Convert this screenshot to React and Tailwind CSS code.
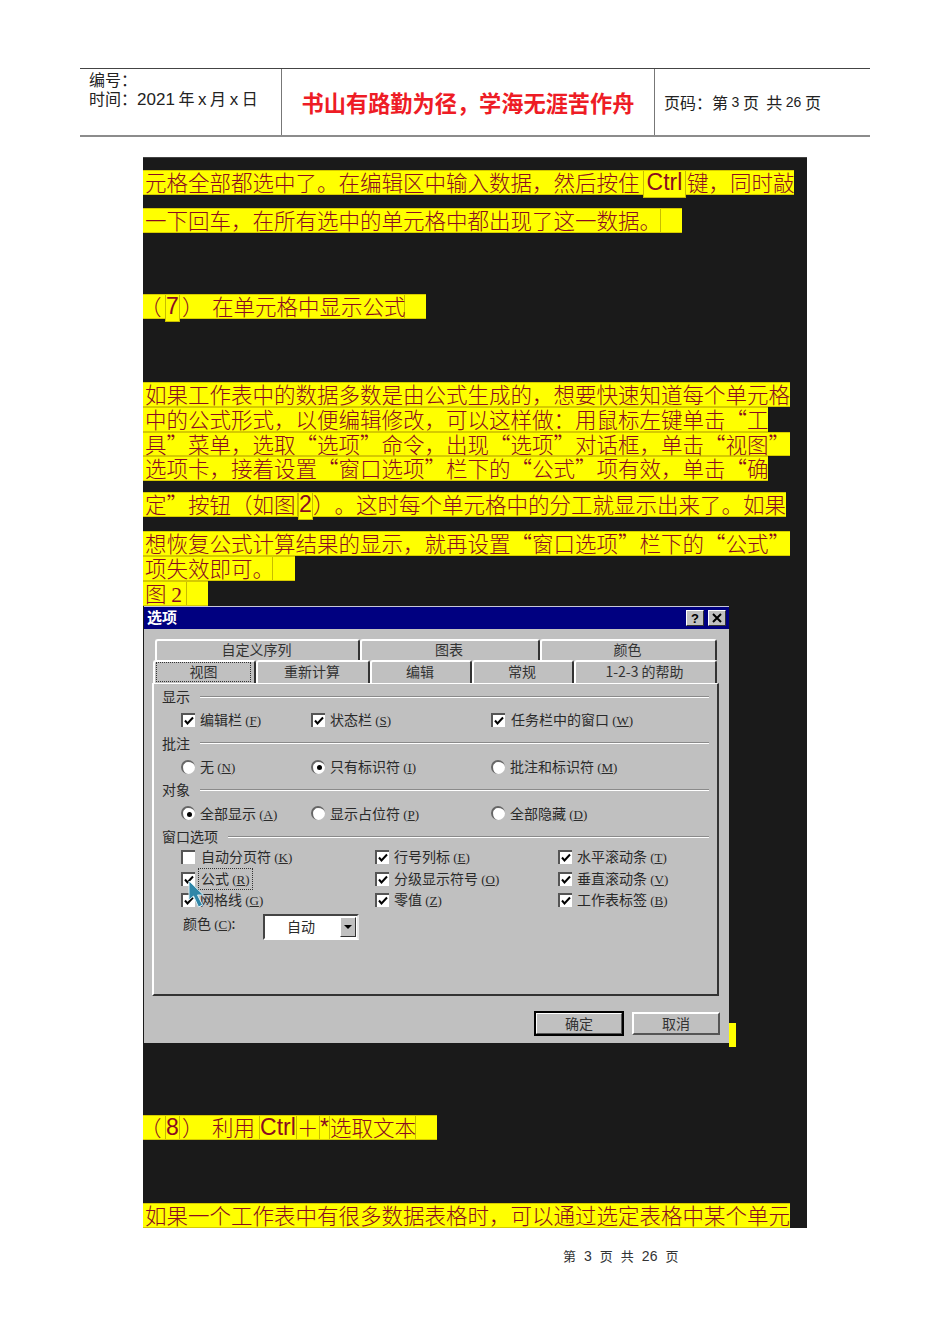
import React from "react";

const Seg = ({ w, c = "", children }) => (
  <span className={`block shrink-0 h-full whitespace-pre ${c}`} style={w ? { width: w } : undefined}>{children}</span>
);
const Lat = ({ w, children, tall }) => (
  <span
    className={`block shrink-0 bg-[#ffff00] border-x border-[#c8bc00] text-center text-[23px] font-['Liberation_Sans',sans-serif] ${tall ? "h-[27px] -mb-[2px] border-b" : "h-full"}`}
    style={{ width: w }}
  >{children}</span>
);
const Line = ({ w, h = "h-[25px]", mt = "", children }) => (
  <div
    className={`flex ${h} ${mt} pl-[2px] bg-[#ffff00] border-y border-[#d6ca00] text-[21.5px] leading-[22px] font-light text-[#8a0b22] [text-spacing-trim:space-all]`}
    style={{ width: w }}
  >{children}</div>
);

const Check = ({ on = true }) => (
  <span className="relative block w-[14px] h-[14px] shrink-0 bg-white border-l-2 border-t-2 border-[#555]">
    {on && (
      <svg viewBox="0 0 12 12" className="absolute left-0 top-0 w-[12px] h-[12px]">
        <path d="M2 5.5 L4.5 8.5 L10 2.5" fill="none" stroke="#000" strokeWidth="2" />
      </svg>
    )}
  </span>
);
const Radio = ({ on }) => (
  <span className="shrink-0 w-[14px] h-[14px] rounded-full bg-white border-l-2 border-t-2 border-[#666] flex items-center justify-center">
    {on && <span className="block w-[5px] h-[5px] rounded-full bg-black" />}
  </span>
);
const Key = ({ k }) => (
  <span className="text-[13px] font-['Liberation_Serif',serif]">(<span className="underline">{k}</span>)</span>
);
const Opt = ({ mark, gap = "gap-[5px]", text, k, focus }) => (
  <div className={`flex items-center ${gap} h-full`}>
    {mark}
    <span className={`whitespace-pre ${focus ? "outline-1 outline-dotted outline-[#333] outline-offset-[1px] px-[1px] leading-[17px]" : ""}`}>{text} <Key k={k} /></span>
  </div>
);
const Legend = ({ t }) => (
  <div className="flex items-center h-[23.33px] gap-[10px]">
    <span>{t}</span>
    <span className="block flex-1 h-[2px] border-t border-b border-t-[#8a8a8a] border-b-white" />
  </div>
);
const Row3 = ({ children }) => (
  <div className="grid grid-cols-[130px_180px_1fr] h-[23.33px] pl-[19px]">{children}</div>
);
const WRow = ({ children, c = "" }) => (
  <div className={`relative grid grid-cols-[194px_183px_1fr] h-[21.5px] pl-[19px] ${c}`}>{children}</div>
);
const Tab = ({ w, h, children }) => (
  <div
    className={`flex items-center justify-center shrink-0 ${h} pb-[2px] pr-[2px] rounded-t-[3px] border-t-2 border-l-2 border-t-white border-l-white border-r-2 border-r-[#333] text-[14px] text-[#333]`}
    style={{ width: w }}
  >{children}</div>
);
const Btn = ({ children, def }) => (
  <button className={`flex items-center justify-center w-[88px] h-[23px] text-[14px] text-[#333] bg-[#c0c0c0] border-2 border-t-white border-l-white border-r-[#555] border-b-[#555] ${def ? "outline-2 outline-black -outline-offset-1" : ""}`}>
    {children}
  </button>
);

function Dialog() {
  return (
    <div className="w-[585px] h-[437px] ml-[1px] shrink-0 bg-[#c0c0c0] text-[14px] text-[#2a2a2a] border-t border-[#c8c8d8]">
      <div className="flex items-center justify-between h-[22px] bg-[#000080] px-[3px]">
        <span className="text-white font-bold text-[15px] pb-[2px]">选项</span>
        <div className="flex gap-[4px]">
          <span className="flex items-center justify-center w-[18px] h-[16px] bg-[#c0c0c0] border border-t-white border-l-white border-r-[#333] border-b-[#333] text-black font-bold text-[13px] leading-none font-['Liberation_Sans',sans-serif]">?</span>
          <span className="flex items-center justify-center w-[18px] h-[16px] bg-[#c0c0c0] border border-t-white border-l-white border-r-[#333] border-b-[#333]">
            <svg viewBox="0 0 10 10" className="w-[10px] h-[10px]"><path d="M1 1 L9 9 M9 1 L1 9" stroke="#000" strokeWidth="2" /></svg>
          </span>
        </div>
      </div>
      <div className="flex ml-[11px] mt-[10px]">
        <Tab w={205} h="h-[21px]">自定义序列</Tab>
        <Tab w={180} h="h-[21px]">图表</Tab>
        <Tab w={177} h="h-[21px]">颜色</Tab>
      </div>
      <div className="flex ml-[9px]">
        <Tab w={103} h="h-[23px]">
          <span className="flex items-center justify-center w-[93px] h-[18px] outline-1 outline-dotted outline-[#333]">视图</span>
        </Tab>
        <Tab w={114} h="h-[23px]">重新计算</Tab>
        <Tab w={102} h="h-[23px]">编辑</Tab>
        <Tab w={102} h="h-[23px]">常规</Tab>
        <Tab w={143} h="h-[23px]">1-2-3 的帮助</Tab>
      </div>
      <div className="ml-[8px] w-[567px] h-[313px] pt-[1px] pl-[8px] pr-[8px] border-l-2 border-t border-l-white border-t-white border-r-2 border-b-2 border-r-[#333] border-b-[#333]">
        <Legend t="显示" />
        <Row3>
          <Opt mark={<Check />} text="编辑栏" k="F" />
          <Opt mark={<Check />} text="状态栏" k="S" />
          <Opt mark={<Check />} gap="gap-[6px]" text="任务栏中的窗口" k="W" />
        </Row3>
        <Legend t="批注" />
        <Row3>
          <Opt mark={<Radio />} text="无" k="N" />
          <Opt mark={<Radio on />} text="只有标识符" k="I" />
          <Opt mark={<Radio />} text="批注和标识符" k="M" />
        </Row3>
        <Legend t="对象" />
        <Row3>
          <Opt mark={<Radio on />} text="全部显示" k="A" />
          <Opt mark={<Radio />} text="显示占位符" k="P" />
          <Opt mark={<Radio />} text="全部隐藏" k="D" />
        </Row3>
        <Legend t="窗口选项" />
        <WRow c="-mt-[2px]">
          <Opt mark={<Check on={false} />} gap="gap-[6px]" text="自动分页符" k="K" />
          <Opt mark={<Check />} text="行号列标" k="E" />
          <Opt mark={<Check />} text="水平滚动条" k="T" />
        </WRow>
        <WRow>
          <Opt mark={<Check />} text="公式" k="R" focus />
          <Opt mark={<Check />} text="分级显示符号" k="O" />
          <Opt mark={<Check />} text="垂直滚动条" k="V" />
          <svg viewBox="0 0 16 28" className="absolute z-10 left-[26px] top-[12px] w-[16px] h-[28px]">
            <path d="M1 1 L1 20 L5.5 16 L10.5 27 L14.5 25 L9.5 15 L15.5 15 Z" fill="#2f86a8" stroke="#d8eef5" strokeWidth="1" />
          </svg>
        </WRow>
        <WRow>
          <Opt mark={<Check />} text="网格线" k="G" />
          <Opt mark={<Check />} text="零值" k="Z" />
          <Opt mark={<Check />} text="工作表标签" k="B" />
        </WRow>
        <div className="flex items-start mt-[3px] pl-[21px]">
          <span className="w-[80px] leading-[18px] whitespace-pre">颜色 <Key k="C" />:</span>
          <div className="flex items-center justify-between w-[96px] h-[26px] bg-white border-2 border-t-[#444] border-l-[#444] border-r-[#e8e8e8] border-b-white pr-[1px]">
            <span className="pl-[22px]">自动</span>
            <span className="flex items-center justify-center w-[16px] h-[20px] bg-[#c0c0c0] border border-t-white border-l-white border-r-[#333] border-b-[#333]">
              <span className="block w-0 h-0 border-x-[4px] border-x-transparent border-t-[4px] border-t-black" />
            </span>
          </div>
        </div>
      </div>
      <div className="flex justify-end gap-[9px] mt-[16px] pr-[9px]">
        <Btn def>确定</Btn>
        <Btn>取消</Btn>
      </div>
    </div>
  );
}

export default function App() {
  return (
    <div className="w-[950px] h-[1344px] bg-white font-['Noto_Sans_CJK_SC','Liberation_Sans',sans-serif] pt-[68px] overflow-hidden">
      <div className="grid grid-cols-[201px_373px_216px] h-[69px] w-[790px] ml-[80px] border-t border-t-[#444] border-b-2 border-b-[#8c8c8c] text-[#222] [text-spacing-trim:space-all]">
        <div className="pl-[9px] pt-[1px] text-[16px] leading-[19px]">
          <div>编号：</div>
          <div className="whitespace-pre">时间：<span className="font-['Liberation_Sans',sans-serif] text-[17px]">2021</span> 年 <span className="font-['Liberation_Sans',sans-serif] text-[17px]">x</span> 月 <span className="font-['Liberation_Sans',sans-serif] text-[17px]">x</span> 日</div>
        </div>
        <div className="flex items-center justify-center border-l border-[#777] text-[22.2px] font-bold text-[#ee1c25] pt-[2px]">书山有路勤为径，学海无涯苦作舟</div>
        <div className="flex items-center pl-[9px] border-l border-[#777] text-[16px] whitespace-pre">页码：第 <span className="text-[14px] font-['Liberation_Sans',sans-serif]">3</span> 页  共 <span className="text-[14px] font-['Liberation_Sans',sans-serif]">26</span> 页</div>
      </div>

      <div className="w-[664px] h-[1071px] ml-[143px] mt-[20px] pt-[12px] bg-[#1a1a1a] border-t border-[#444]">
        <Line w={651}>
          <Seg w={498}>元格全部都选中了。在编辑区中输入数据，然后按住</Seg>
          <Lat w={43} tall>Ctrl</Lat>
          <Seg c="pl-[1px]">键，同时敲</Seg>
        </Line>
        <Line w={539} mt="mt-[13px]">
          <Seg w={516} c="border-r border-[#c8bc00]">一下回车，在所有选中的单元格中都出现了这一数据。</Seg>
        </Line>
        <Line w={283} mt="mt-[61px]">
          <Seg w={20} c="[text-indent:-5px]">（</Seg>
          <Lat w={15} tall>7</Lat>
          <Seg w={32} c="pl-[2px]">）</Seg>
          <Seg w={193} c="border-r border-[#c8bc00]">在单元格中显示公式</Seg>
        </Line>
        <Line w={647} mt="mt-[63px]"><Seg>如果工作表中的数据多数是由公式生成的，想要快速知道每个单元格</Seg></Line>
        <Line w={625}><Seg>中的公式形式，以便编辑修改，可以这样做：用鼠标左键单击“工</Seg></Line>
        <Line w={647} h="h-[24px]"><Seg>具”菜单，选取“选项”命令，出现“选项”对话框，单击“视图”</Seg></Line>
        <Line w={625}><Seg>选项卡，接着设置“窗口选项”栏下的“公式”项有效，单击“确</Seg></Line>
        <Line w={643} mt="mt-[11px]">
          <Seg w={153} c="border-r border-[#c8bc00]">定”按钮（如图</Seg>
          <Lat w={15} tall>2</Lat>
          <Seg>）。这时每个单元格中的分工就显示出来了。如果</Seg>
        </Line>
        <Line w={647} mt="mt-[14px]"><Seg>想恢复公式计算结果的显示，就再设置“窗口选项”栏下的“公式”</Seg></Line>
        <Line w={152}><Seg w={128} c="border-r border-[#c8bc00]">项失效即可。</Seg></Line>
        <Line w={65}>
          <Seg w={42} c="border-r border-[#c8bc00]">图 <span className="font-['Liberation_Serif',serif]">2</span></Seg>
        </Line>
        <div className="flex items-end">
          <Dialog />
          <div className="w-[7px] h-[24px] bg-[#ffff00] -mb-[4px]" />
        </div>
        <Line w={294} mt="mt-[72px]">
          <Seg w={20} c="[text-indent:-5px]">（</Seg>
          <Lat w={15}>8</Lat>
          <Seg w={32} c="pl-[2px]">）</Seg>
          <Seg w={47}>利用</Seg>
          <Lat w={38}>Ctrl</Lat>
          <Seg w={22}>＋</Seg>
          <Lat w={11}>*</Lat>
          <Seg w={86} c="border-r border-[#c8bc00]">选取文本</Seg>
        </Line>
        <Line w={647} mt="mt-[63px]"><Seg>如果一个工作表中有很多数据表格时，可以通过选定表格中某个单元</Seg></Line>
      </div>

      <div className="flex gap-[8px] ml-[563px] mt-[19px] text-[13px] leading-[18px] text-[#333]">
        <span>第</span>
        <span className="font-['Liberation_Sans',sans-serif] text-[14px]">3</span>
        <span>页</span>
        <span>共</span>
        <span className="font-['Liberation_Sans',sans-serif] text-[14px]">26</span>
        <span>页</span>
      </div>
    </div>
  );
}
